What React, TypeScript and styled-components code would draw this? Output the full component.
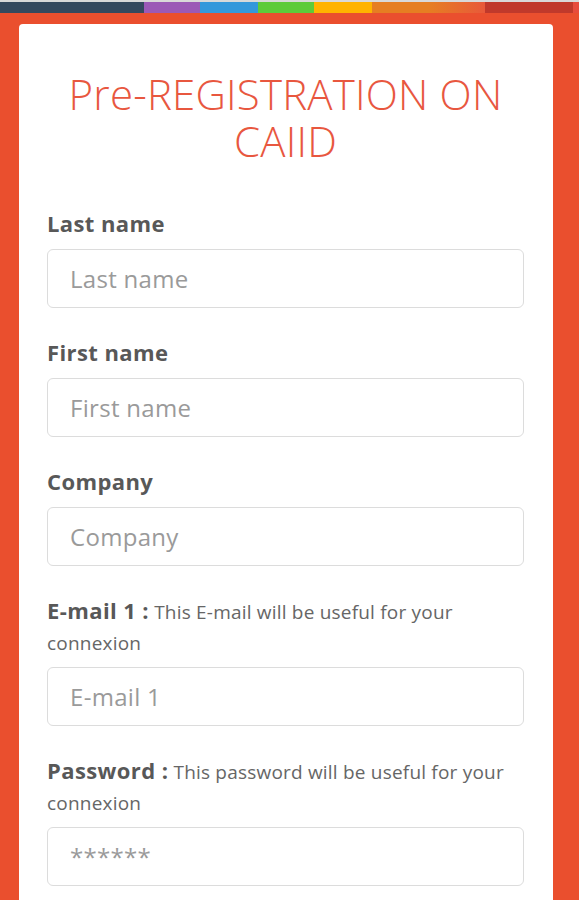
import React from 'react';
import styled, { createGlobalStyle } from 'styled-components';

const GlobalStyle = createGlobalStyle`
  html, body {
    margin: 0;
    padding: 0;
    background: #ea4f2e;
    font-family: 'Open Sans', 'Liberation Sans', sans-serif;
  }
`;

const StyledPage = styled.div`
  height: 900px;
  background: #ea4f2e;
  overflow: hidden;
`;

const StyledColorBar = styled.div`
  display: flex;
  height: 13px;
  border-top: 2px solid #d9d9d9;
  box-sizing: border-box;
`;

const StyledSegment = styled.div<{ $color: string; $width: number }>`
  flex: 0 0 ${(p) => p.$width}px;
  background: ${(p) => p.$color};
`;

const StyledCard = styled.div`
  margin: 11px 26px 0 19px;
  background: #fff;
  border-radius: 4px 4px 0 0;
  padding: 46px 29px 40px 28px;
  min-height: 900px;
`;

const StyledTitle = styled.h1`
  margin: 0 0 44px;
  font-weight: 300;
  font-size: 42px;
  line-height: 47px;
  letter-spacing: 0.2px;
  color: #e8573f;
  text-align: center;
`;

const StyledField = styled.div`
  margin-bottom: 29px;
`;

const StyledLabel = styled.label`
  display: block;
  color: #585858;
  font-size: 22px;
  font-weight: 700;
  letter-spacing: 0.4px;
  line-height: 31px;
  margin-bottom: 10px;
`;

const StyledHint = styled.span`
  font-size: 19px;
  font-weight: 400;
  line-height: 1;
  letter-spacing: 0.2px;
  color: #666;
`;

const StyledInput = styled.input`
  display: block;
  width: 100%;
  box-sizing: border-box;
  height: 59px;
  border: 1px solid #dcdcdc;
  border-radius: 6px;
  padding: 0 22px;
  font-family: inherit;
  font-size: 24px;
  letter-spacing: 0.3px;
  color: #555;
  outline: none;
  &::placeholder {
    color: #9a9a9a;
  }
`;

const segments = [
  { color: '#34495e', width: 144 },
  { color: '#9b59b6', width: 56 },
  { color: '#3498db', width: 58 },
  { color: '#5ecb3a', width: 56 },
  { color: '#ffb300', width: 58 },
  { color: 'linear-gradient(90deg, #e67e22, #e67e22 50%, #e8593a)', width: 113 },
  { color: '#c0392b', width: 88 },
  { color: '#e74c3c', width: 6 },
];

type FieldProps = {
  label: string;
  hint?: string;
  placeholder: string;
  type?: string;
};

const Field: React.FC<FieldProps> = ({ label, hint, placeholder, type = 'text' }) => (
  <StyledField>
    <StyledLabel>
      {label}
      {hint && <StyledHint> {hint}</StyledHint>}
    </StyledLabel>
    <StyledInput type={type} placeholder={placeholder} />
  </StyledField>
);

export default function App() {
  return (
    <StyledPage>
      <GlobalStyle />
      <StyledColorBar>
        {segments.map((s) => (
          <StyledSegment key={s.color + s.width} $color={s.color} $width={s.width} />
        ))}
      </StyledColorBar>
      <StyledCard>
        <StyledTitle>Pre-REGISTRATION ON CAIID</StyledTitle>
        <Field label="Last name" placeholder="Last name" />
        <Field label="First name" placeholder="First name" />
        <Field label="Company" placeholder="Company" />
        <Field
          label="E-mail 1 :"
          hint="This E-mail will be useful for your connexion"
          placeholder="E-mail 1"
          type="email"
        />
        <Field
          label="Password :"
          hint="This password will be useful for your connexion"
          placeholder="******"
          type="password"
        />
      </StyledCard>
    </StyledPage>
  );
}
